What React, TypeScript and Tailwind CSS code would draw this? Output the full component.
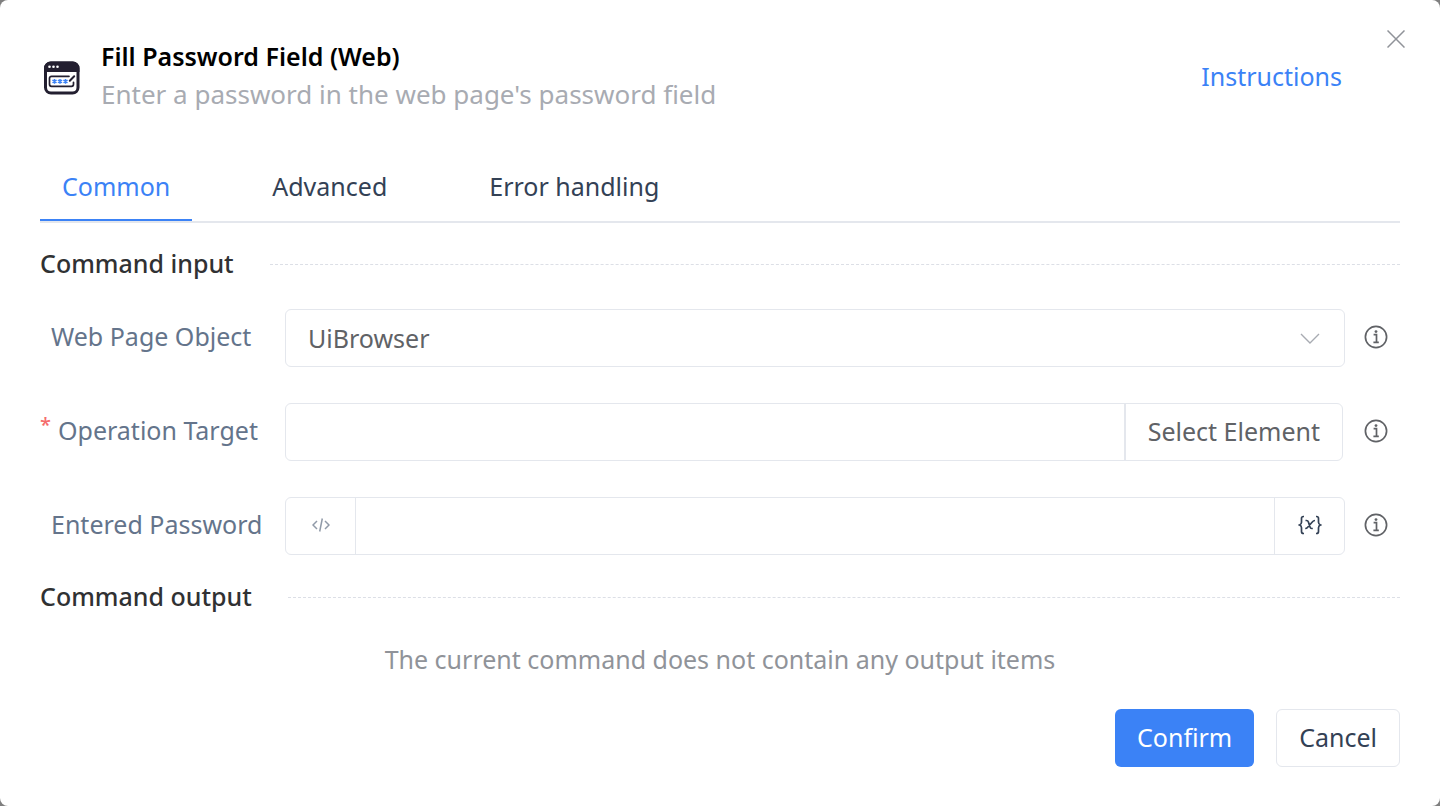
import type { ReactNode } from 'react';

const tabs = ['Common', 'Advanced', 'Error handling'];

function InfoIcon() {
  return (
    <svg viewBox="0 0 24 24" className="h-6 w-6" fill="none" stroke="#606266" strokeWidth="1.7">
      <circle cx="12" cy="12" r="10.6" />
      <path d="M9.6 9.700h2.900v7.600M9.400 17.300h5.400" />
      <circle cx="12" cy="6.600" r="1.400" fill="#606266" stroke="none" />
    </svg>
  );
}

function CommandIcon() {
  return (
    <svg viewBox="0 0 36 34" className="h-[34px] w-9 shrink-0" fill="none">
      <rect x="1.500" y="2" width="32.500" height="30" rx="5.500" fill="#fff" stroke="#231f30" strokeWidth="3" />
      <path d="M0 11V7a6.500 6.500 0 0 1 6.500-6.500H29A6.500 6.500 0 0 1 35.500 7v4z" fill="#231f30" />
      <circle cx="5.500" cy="5.800" r="1.300" fill="#fff" />
      <circle cx="9.500" cy="5.800" r="1.300" fill="#fff" />
      <circle cx="13.500" cy="5.800" r="1.300" fill="#fff" />
      <path
        d="M25 15.300H7.500a2 2 0 0 0-2 2v6a2 2 0 0 0 2 2h20a2 2 0 0 0 2-2v-2"
        stroke="#231f30"
        strokeWidth="1.700"
        strokeLinecap="round"
      />
      <path d="M25.800 19.800l4.400-4.600" stroke="#231f30" strokeWidth="2" strokeLinecap="round" />
      <path
        d="M10.500 18v4.800M8.400 19.200l4.200 2.400M12.600 19.200l-4.200 2.400M16 18v4.800M13.900 19.200l4.200 2.400M18.100 19.200l-4.200 2.400M21.500 18v4.800M19.400 19.200l4.200 2.400M23.600 19.200l-4.200 2.400"
        stroke="#3b82f6"
        strokeWidth="1.500"
      />
    </svg>
  );
}

function SectionTitle({ children }: { children: ReactNode }) {
  return (
    <div className="flex items-center gap-9">
      <h2 className="pb-0.5 font-medium text-[#303133]">{children}</h2>
      <div className="flex-1 border-t border-dashed border-[#dcdfe6]" />
    </div>
  );
}

type FieldRowProps = { id: string; label: string; required?: boolean; children: ReactNode };

function FieldRow({ id, label, required, children }: FieldRowProps) {
  return (
    <div className="flex items-center">
      <label htmlFor={id} className="flex w-[245px] shrink-0 pb-1 whitespace-nowrap text-[#64748b]">
        {required ? <span className="w-[18px] text-xl font-medium text-[#f56c6c]">*</span> : <span className="w-[11px]" />}
        {label}
      </label>
      <div className="h-[58px] min-w-0 flex-1">{children}</div>
      <button type="button" aria-label={`About ${label}`} className="mr-3 ml-[19px] pb-0.5">
        <InfoIcon />
      </button>
    </div>
  );
}

export default function App() {
  return (
    <div className="min-h-screen bg-[#7f7f7f] font-['Noto_Sans',sans-serif] text-[25px] leading-[38px]">
      <div role="dialog" aria-labelledby="title" className="relative flex min-h-screen flex-col rounded-lg bg-white px-10 pt-[37px] pb-[39px]">
        <button type="button" aria-label="Close" className="absolute top-[26px] right-[31px] p-1">
          <svg viewBox="0 0 18 18" className="h-[18px] w-[18px]" fill="none" stroke="#909399" strokeWidth="1.500">
            <path d="M0.500 0.500l17 17M17.500 0.500l-17 17" />
          </svg>
        </button>

        <header className="flex items-center">
          <div className="mr-[21px] ml-1 pt-1.5">
            <CommandIcon />
          </div>
          <div className="flex-1">
            <h1 id="title" className="font-semibold text-black">Fill Password Field (Web)</h1>
            <p className="text-[26px] text-[#a8abb2]">Enter a password in the web page's password field</p>
          </div>
          <a href="#instructions" className="mr-[58px] pt-0.5 text-[#3b82f6]">Instructions</a>
        </header>

        <div role="tablist" className="mt-[34px] flex gap-[58px] border-b-2 border-[#e4e7ed]">
          {tabs.map((tab, i) => (
            <button
              key={tab}
              type="button"
              role="tab"
              aria-selected={i === 0}
              className={`border-b-2 px-[22px] pt-5 pb-3.5 ${i === 0 ? 'border-[#3b82f6] text-[#3b82f6]' : 'border-transparent text-[#334155]'}`}
            >
              {tab}
            </button>
          ))}
        </div>

        <form className="flex flex-col pt-[21px]">
          <SectionTitle>Command input</SectionTitle>

          <div className="flex flex-col gap-9 pt-[25px] pb-[22px]">
            <FieldRow id="page" label="Web Page Object">
              <div className="relative h-full">
                <select id="page" className="h-full w-full appearance-none rounded-md border border-[#e4e7ed] bg-white px-[22px] text-[#606266]">
                  <option>UiBrowser</option>
                </select>
                <svg viewBox="0 0 20 12" className="pointer-events-none absolute top-6 right-[25px] h-3 w-5" fill="none" stroke="#a8abb2" strokeWidth="1.400">
                  <path d="M1 1l9 9 9-9" />
                </svg>
              </div>
            </FieldRow>

            <FieldRow id="target" label="Operation Target" required>
              <div className="mr-0.5 flex h-full overflow-hidden rounded-md border border-[#e4e7ed]">
                <input id="target" type="text" className="min-w-0 flex-1 px-5 outline-none" />
                <button type="button" className="border-l-2 border-[#e4e7ed] px-[22px] pb-0.5 text-[#606266]">Select Element</button>
              </div>
            </FieldRow>

            <FieldRow id="password" label="Entered Password">
              <div className="flex h-full overflow-hidden rounded-md border border-[#e4e7ed]">
                <button type="button" aria-label="Expression mode" className="flex w-[70px] items-center justify-center border-r border-[#e4e7ed] pb-0.5">
                  <svg viewBox="0 0 18 14" className="h-3.5 w-[18px]" fill="none" stroke="#909aa8" strokeWidth="1.500">
                    <path d="M5 3L1 7l4 4M13 3l4 4-4 4M10.300 0.500l-2.600 13" />
                  </svg>
                </button>
                <input id="password" type="text" className="min-w-0 flex-1 px-5 outline-none" />
                <button type="button" aria-label="Insert variable" className="flex w-[70px] items-center justify-center border-l border-[#e4e7ed] pb-0.5">
                  <svg viewBox="0 0 24 20" className="h-5 w-6" fill="none" stroke="#334155" strokeWidth="1.700">
                    <path d="M6 1.500H5.500c-1.400 0-2 .7-2 2v3.800c0 1.400-.6 2.200-2 2.700 1.400.5 2 1.300 2 2.700v3.800c0 1.300.6 2 2 2H6M18 1.500h.5c1.400 0 2 .7 2 2v3.800c0 1.400.6 2.200 2 2.700-1.400.5-2 1.300-2 2.700v3.800c0 1.300-.6 2-2 2H18" />
                    <path d="M7.500 5.500h1c1.200 0 1.600.5 1.900 1.500l1.600 5c.3 1 .8 1.500 1.800 1.500h1M17 5.500c-1.200 0-1.800.4-2.500 1.300l-4.800 5.400c-.7.9-1.300 1.300-2.500 1.300" />
                  </svg>
                </button>
              </div>
            </FieldRow>
          </div>

          <SectionTitle>Command output</SectionTitle>
          <p className="mt-[23px] text-center text-[#909399]">The current command does not contain any output items</p>

          <div className="mt-[31px] flex justify-end gap-[22px]">
            <button type="submit" className="h-[58px] rounded-md bg-[#3b82f6] px-[22px] pb-0.5 text-white">Confirm</button>
            <button type="button" className="h-[58px] rounded-md border border-[#e4e7ed] px-[22px] pb-0.5 text-[#334155]">Cancel</button>
          </div>
        </form>
      </div>
    </div>
  );
}
